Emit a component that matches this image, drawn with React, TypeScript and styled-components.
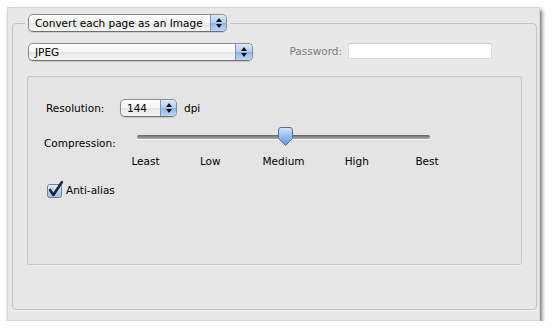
import styled, { createGlobalStyle } from 'styled-components';

const GlobalStyle = createGlobalStyle`
  body {
    margin: 0;
    background: #ffffff;
    font-family: "DejaVu Sans", "Lucida Grande", sans-serif;
    font-size: 10.5px;
    color: #000;
  }
`;

const Page = styled.div`
  padding: 7px 0 0 7px;
`;

const Window = styled.div`
  width: 533px;
  height: 314px;
  box-sizing: border-box;
  display: flex;
  flex-direction: column;
  padding: 6px 2px 10px 4px;
  background: #e8e8e8;
  border: 1px solid #d5d5d5;
  box-shadow: 2px 3px 4px rgba(0, 0, 0, 0.55);
`;

const Group = styled.fieldset`
  flex: 1;
  margin: 0;
  min-width: 0;
  padding: 11px 14px 0 14px;
  border: 1px solid #c4c4c4;
  border-radius: 4px;
  box-shadow: 0 1px 0 #f3f3f3;
`;

const Legend = styled.legend`
  padding: 0 3px;
  margin-left: -2px;
`;

const Popup = styled.div<{ $width: number; $arrow: number; $indent?: number }>`
  width: ${(p) => p.$width}px;
  height: 18px;
  box-sizing: border-box;
  margin-left: ${(p) => p.$indent ?? 0}px;
  display: flex;
  align-items: stretch;
  border: 1px solid #8c8c8c;
  border-bottom-color: #6f6f6f;
  border-radius: 5px;
  overflow: hidden;
  background: linear-gradient(#ffffff, #f4f4f4 50%, #e6e6e6 51%, #f6f6f6);
  box-shadow: 0 1px 1px rgba(0, 0, 0, 0.12);
  flex-shrink: 0;

  & > span:first-child {
    flex: 1;
    padding-left: 6px;
    line-height: 16px;
    white-space: nowrap;
  }

  & > span:last-child {
    width: ${(p) => p.$arrow}px;
    border-left: 1px solid #7d94b8;
    background: linear-gradient(#dbe8f8, #b2cdf1 50%, #8fb5ea 51%, #bcd6f7);
    display: flex;
    flex-direction: column;
    align-items: center;
    justify-content: center;
    gap: 2px;
  }
`;

const Arrow = styled.i<{ $down?: boolean }>`
  width: 0;
  height: 0;
  border-left: 3px solid transparent;
  border-right: 3px solid transparent;
  ${(p) => (p.$down ? 'border-top: 4px solid #111;' : 'border-bottom: 4px solid #111;')}
`;

const PopupButton = ({ label, width, arrow, indent }: { label: string; width: number; arrow: number; indent?: number }) => (
  <Popup $width={width} $arrow={arrow} $indent={indent}>
    <span>{label}</span>
    <span>
      <Arrow />
      <Arrow $down />
    </span>
  </Popup>
);

const TopRow = styled.div`
  display: flex;
  align-items: flex-start;
  padding-right: 30px;
`;

const Spacer = styled.div`
  flex: 1;
`;

const DimLabel = styled.span`
  color: #7c7c7c;
  line-height: 16px;
  margin-right: 6px;
`;

const PasswordField = styled.div`
  width: 144px;
  height: 16px;
  box-sizing: border-box;
  background: #ffffff;
  border: 1px solid #dadada;
  border-top-color: #cfcfcf;
`;

const Inner = styled.div`
  margin-top: 15px;
  height: 189px;
  box-sizing: border-box;
  padding: 22px 16px 0 16px;
  background: #e4e4e4;
  border: 1px solid #c9c9c9;
  border-radius: 2px;
  box-shadow: 0 1px 0 #f0f0f0;
`;

const ResRow = styled.div`
  display: flex;
  align-items: center;
  height: 18px;
  padding-left: 2px;
`;

const RowLabel = styled.span<{ $width: number }>`
  width: ${(p) => p.$width}px;
  flex-shrink: 0;
  white-space: nowrap;
`;

const Unit = styled.span`
  margin-left: 7px;
`;

const CompRow = styled.div`
  display: grid;
  grid-template-columns: 93px 293px;
  margin-top: 10px;
`;

const CompLabel = styled.span`
  padding-top: 10px;
  white-space: nowrap;
`;

const Slider = styled.div`
  display: flex;
  flex-direction: column;
`;

const TrackArea = styled.div`
  position: relative;
  height: 20px;
`;

const Track = styled.div`
  margin-top: 8px;
  height: 4px;
  border-radius: 2px;
  background: linear-gradient(#5e5e5e, #8e8e8e 50%, #a9a9a9);
  box-shadow: 0 1px 0 #f4f4f4;
`;

const Knob = styled.svg`
  position: absolute;
  left: 140px;
  top: 0;
`;

const Ticks = styled.div`
  display: grid;
  grid-template-columns: repeat(5, 73.25px);
  margin-left: -36.6px;
  margin-top: 8px;
`;

const Tick = styled.span<{ $padL?: number; $padR?: number }>`
  text-align: center;
  line-height: 13px;
  padding-left: ${(p) => p.$padL ?? 0}px;
  padding-right: ${(p) => p.$padR ?? 0}px;
  white-space: nowrap;
`;

const CheckRow = styled.label`
  display: flex;
  align-items: center;
  gap: 2px;
  margin-top: 13px;
  padding-left: 3px;
`;

const CheckBox = () => (
  <svg width="17" height="17" viewBox="0 0 17 17">
    <defs>
      <linearGradient id="cb" x1="0" y1="0" x2="0" y2="1">
        <stop offset="0" stopColor="#e4eefb" />
        <stop offset="0.5" stopColor="#b9d2f3" />
        <stop offset="1" stopColor="#9cbfee" />
      </linearGradient>
    </defs>
    <rect x="0.5" y="3.5" width="14" height="13" rx="2" fill="url(#cb)" stroke="#6f7f98" />
    <path d="M3.2 9.2 L6.4 14 L14.8 1.2" fill="none" stroke="#1d2535" strokeWidth="2.6" strokeLinecap="round" strokeLinejoin="round" />
  </svg>
);

const ticks = [
  { t: 'Least', l: 17 },
  { t: 'Low' },
  { t: 'Medium' },
  { t: 'High' },
  { t: 'Best', r: 6 },
];

export default function App() {
  return (
    <Page>
      <GlobalStyle />
      <Window>
        <Group>
          <Legend>
            <PopupButton label="Convert each page as an Image" width={199} arrow={15} />
          </Legend>
          <TopRow>
            <PopupButton label="JPEG" width={225} arrow={16} indent={1} />
            <Spacer />
            <DimLabel>Password:</DimLabel>
            <PasswordField />
          </TopRow>
          <Inner>
            <ResRow>
              <RowLabel $width={74}>Resolution:</RowLabel>
              <PopupButton label="144" width={57} arrow={15} />
              <Unit>dpi</Unit>
            </ResRow>
            <CompRow>
              <CompLabel>Compression:</CompLabel>
              <Slider>
                <TrackArea>
                  <Track />
                  <Knob width="17" height="20" viewBox="0 0 17 20">
                    <defs>
                      <linearGradient id="kn" x1="0" y1="0" x2="0" y2="1">
                        <stop offset="0" stopColor="#d6e5fa" />
                        <stop offset="0.45" stopColor="#9cc0f0" />
                        <stop offset="1" stopColor="#5f95e2" />
                      </linearGradient>
                    </defs>
                    <path
                      d="M1.5 3 Q1.5 0.5 4 0.5 H13 Q15.5 0.5 15.5 3 V11.5 L8.5 18.5 L1.5 11.5 Z"
                      fill="url(#kn)"
                      stroke="#56739d"
                    />
                  </Knob>
                </TrackArea>
                <Ticks>
                  {ticks.map((k) => (
                    <Tick key={k.t} $padL={k.l} $padR={k.r}>
                      {k.t}
                    </Tick>
                  ))}
                </Ticks>
              </Slider>
            </CompRow>
            <CheckRow>
              <CheckBox />
              <span>Anti-alias</span>
            </CheckRow>
          </Inner>
        </Group>
      </Window>
    </Page>
  );
}
